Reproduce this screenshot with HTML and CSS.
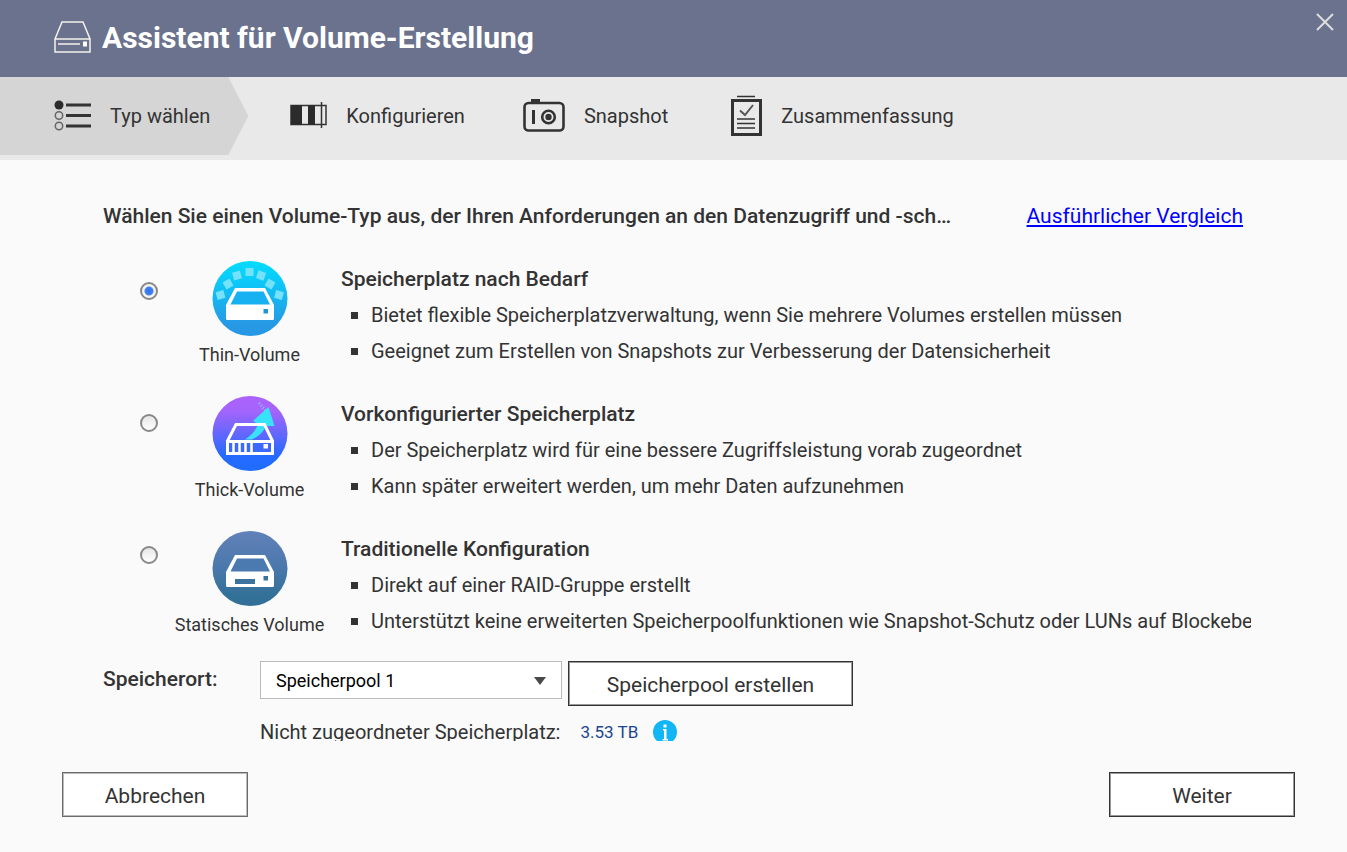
FILE: index.html
```html
<!DOCTYPE html>
<html lang="de">
<head>
    <meta charset="UTF-8">
    <meta name="viewport" content="width=device-width, initial-scale=1.0">
    <title>Assistent für Volume-Erstellung</title>
    <link rel="stylesheet" href="styles.css">
</head>
<body>
    <header class="header">
        <svg class="header-icon" width="37" height="34" viewBox="0 0 37 34" fill="none" stroke="#f4f2ec" stroke-width="1.5">
            <path d="M1 18 L8 1 H29 L36 18 V31 H1 Z M1 18 H36"/>
            <path d="M4 23 H26" stroke-width="1.5"/>
            <rect x="29" y="20.500" width="4" height="5" fill="#fff" stroke="none"/>
        </svg>
        <h1>Assistent für Volume-Erstellung</h1>
        <button class="close" type="button" aria-label="Schließen">
            <svg width="18" height="18" viewBox="0 0 18 18" stroke="#dedede" stroke-width="2"><path d="M1 1 L17 17 M17 1 L1 17"/></svg>
        </button>
    </header>

    <nav>
        <ol class="steps">
            <li class="step active">
                <svg width="37" height="34" viewBox="0 0 37 34" fill="none" stroke="#333">
                    <circle cx="5" cy="6" r="4.5" fill="#2b2b2b" stroke="none"/>
                    <circle cx="5" cy="16.5" r="3.7" stroke="#666" stroke-width="1.5"/>
                    <circle cx="5" cy="27" r="3.7" stroke="#666" stroke-width="1.5"/>
                    <path d="M12 6 H37 M12 16.5 H37 M12 27 H37" stroke-width="3"/>
                </svg>
                <span>Typ wählen</span>
            </li>
            <li class="step">
                <svg width="37" height="28" viewBox="0 0 37 28" fill="none" stroke="#333">
                    <rect x="1" y="3.500" width="35" height="19" stroke-width="1.5"/>
                    <path d="M1 3.500 H12 V22.500 H1 Z M18 3.500 H25 V22.500 H18 Z" fill="#2b2b2b" stroke="none"/>
                    <path d="M31.5 0 V26" stroke-width="1.5"/>
                </svg>
                <span>Konfigurieren</span>
            </li>
            <li class="step">
                <svg width="42" height="36" viewBox="0 0 42 36" fill="none" stroke="#333">
                    <rect x="1.5" y="5" width="39" height="27.5" rx="4" stroke-width="2.6"/>
                    <rect x="8" y="1" width="9" height="4" fill="#333" stroke="none"/>
                    <path d="M10.5 12 V26" stroke-width="3"/>
                    <circle cx="25.5" cy="19" r="6.3" stroke-width="2.6"/>
                    <circle cx="25.5" cy="19" r="3.2" fill="#333" stroke="none"/>
                </svg>
                <span>Snapshot</span>
            </li>
            <li class="step">
                <svg width="34" height="42" viewBox="-3 0 34 42" fill="none" stroke="#333">
                    <path d="M6 1.5 H24" stroke-width="1.5"/>
                    <rect x="1.5" y="5.5" width="28" height="34" stroke-width="3"/>
                    <path d="M9 15.5 L14 20 L22 10" stroke="#555" stroke-width="2"/>
                    <path d="M6 24 H24 M6 28.5 H24 M6 33 H24" stroke-width="1.4"/>
                </svg>
                <span>Zusammenfassung</span>
            </li>
        </ol>
    </nav>

    <main class="content">
        <div class="intro">
            <h2>Wählen Sie einen Volume-Typ aus, der Ihren Anforderungen an den Datenzugriff und -schutz entspricht:</h2>
            <a href="#">Ausführlicher Vergleich</a>
        </div>

        <div class="options">
            <div class="radios">
                <input type="radio" name="volume" id="thin" checked>
                <input type="radio" name="volume" id="thick">
                <input type="radio" name="volume" id="static">
            </div>
            <div class="types">
                <div class="type">
                    <label class="type-label" for="thin">
                        <svg width="76" height="76" viewBox="0 0 76 76">
                            <defs>
                                <linearGradient id="thinFill" x1="0" y1="0" x2="0" y2="1">
                                    <stop offset="0" stop-color="#06dcfc"/>
                                    <stop offset="0.25" stop-color="#0bcaf9"/>
                                    <stop offset="0.85" stop-color="#2798e4"/>
                                    <stop offset="1" stop-color="#2798e4"/>
                                </linearGradient>
                            </defs>
                            <circle cx="38" cy="37.500" r="37.500" fill="url(#thinFill)"/>
                            <g fill="#74e2fb">
                                <rect x="4.500" y="30" width="8" height="8" transform="rotate(-15 8.500 34)"/>
                                <rect x="12" y="19" width="8" height="8" transform="rotate(-30 16 23)"/>
                                <rect x="21" y="10.500" width="8" height="8" transform="rotate(-15 25 14.500)"/>
                                <rect x="33.500" y="7" width="8" height="8"/>
                                <rect x="45" y="10.500" width="8" height="8" transform="rotate(20 49 14.500)"/>
                                <rect x="54" y="19" width="8" height="8" transform="rotate(30 58 23)"/>
                                <rect x="63" y="30" width="8" height="8" transform="rotate(15 67 34)"/>
                            </g>
                            <path d="M23 27 H53 L62 44 V57.500 Q62 59 60.500 59 H15.500 Q14 59 14 57.500 V44 Z" fill="#fff"/>
                            <path d="M25 30.500 H51.500 L58 43.500 H18.500 Z" fill="#17b1f1"/>
                            <rect x="51.500" y="48" width="4.500" height="4.500" fill="#1c97d4"/>
                        </svg>
                        <span>Thin-Volume</span>
                    </label>
                    <div class="type-text">
                        <h3>Speicherplatz nach Bedarf</h3>
                        <ul>
                            <li>Bietet flexible Speicherplatzverwaltung, wenn Sie mehrere Volumes erstellen müssen</li>
                            <li>Geeignet zum Erstellen von Snapshots zur Verbesserung der Datensicherheit</li>
                        </ul>
                    </div>
                </div>
                <div class="type">
                    <label class="type-label" for="thick">
                        <svg width="76" height="76" viewBox="0 0 76 76">
                            <defs>
                                <linearGradient id="thickFill" x1="0" y1="0" x2="0" y2="1">
                                    <stop offset="0" stop-color="#ac62fc"/>
                                    <stop offset="0.2" stop-color="#a464fc"/>
                                    <stop offset="0.8" stop-color="#246aff"/>
                                    <stop offset="1" stop-color="#1f6dff"/>
                                </linearGradient>
                            </defs>
                            <circle cx="38" cy="37.500" r="37.500" fill="url(#thickFill)"/>
                            <path d="M47 7 L54 15" fill="none" stroke="#8fc4fb" stroke-width="3" stroke-dasharray="1 2"/>
                            <path d="M56.500 11 L62.500 30 L54 30 Q50 39 40 43.500 H33 Q43 37 46 28 L41 25 Z" fill="#38e2fb"/>
                            <path d="M15.500 45 L24 28.500 H52.500 L60.500 45" fill="none" stroke="#fff" stroke-width="3"/>
                            <rect x="15.500" y="45.500" width="45" height="12" fill="#3c68fb" stroke="#fff" stroke-width="3"/>
                            <path d="M21.500 45 V57 M27.500 45 V57 M33.500 45 V57 M39.500 45 V57" stroke="#fff" stroke-width="2.500"/>
                            <rect x="51.500" y="48" width="4.500" height="4.500" fill="#fff"/>
                        </svg>
                        <span>Thick-Volume</span>
                    </label>
                    <div class="type-text">
                        <h3>Vorkonfigurierter Speicherplatz</h3>
                        <ul>
                            <li>Der Speicherplatz wird für eine bessere Zugriffsleistung vorab zugeordnet</li>
                            <li>Kann später erweitert werden, um mehr Daten aufzunehmen</li>
                        </ul>
                    </div>
                </div>
                <div class="type">
                    <label class="type-label" for="static">
                        <svg width="76" height="76" viewBox="0 0 76 76">
                            <defs>
                                <linearGradient id="staticFill" x1="0" y1="0" x2="0" y2="1">
                                    <stop offset="0" stop-color="#6181b9"/>
                                    <stop offset="0.45" stop-color="#4c79ad"/>
                                    <stop offset="0.85" stop-color="#337198"/>
                                    <stop offset="1" stop-color="#316f96"/>
                                </linearGradient>
                            </defs>
                            <circle cx="38" cy="37.500" r="37.500" fill="url(#staticFill)"/>
                            <path d="M23 24 H53 L62 41 V54.500 Q62 56 60.500 56 H15.500 Q14 56 14 54.500 V41 Z" fill="#fff"/>
                            <path d="M25 27.500 H51.500 L58 40.500 H18.500 Z" fill="#4b7ab1"/>
                            <rect x="23" y="48" width="20" height="5" fill="#3b739f"/>
                            <rect x="51.500" y="45" width="4.500" height="4.500" fill="#3b739f"/>
                        </svg>
                        <span>Statisches Volume</span>
                    </label>
                    <div class="type-text">
                        <h3>Traditionelle Konfiguration</h3>
                        <ul>
                            <li>Direkt auf einer RAID-Gruppe erstellt</li>
                            <li>Unterstützt keine erweiterten Speicherpoolfunktionen wie Snapshot-Schutz oder LUNs auf Blockebene</li>
                        </ul>
                    </div>
                </div>
            </div>
        </div>

        <div class="location">
            <label class="location-label" for="pool">Speicherort:</label>
            <div class="location-fields">
                <div class="location-row">
                    <div class="select">
                        <select id="pool">
                            <option>Speicherpool 1</option>
                        </select>
                    </div>
                    <button class="btn btn-wide" type="button">Speicherpool erstellen</button>
                </div>
                <div class="free-space">
                    <span>Nicht zugeordneter Speicherplatz:</span>
                    <span class="size">3.53 TB</span>
                    <svg width="24" height="24" viewBox="0 0 24 24">
                        <circle cx="12" cy="12" r="12" fill="#12b5f5"/>
                        <path d="M10 9 H13.500 V19 H15 V20.500 H9.500 V19 H11 V10.500 H10 Z M10.500 4.500 H13.500 V7.500 H10.500 Z" fill="#fff"/>
                    </svg>
                </div>
            </div>
        </div>
    </main>

    <footer class="footer">
        <button class="btn btn-cancel" type="button">Abbrechen</button>
        <button class="btn" type="button">Weiter</button>
    </footer>
</body>
</html>
```
FILE: styles.css
```css
* {
    box-sizing: border-box;
}
body {
    margin: 0;
    height: 100vh;
    display: flex;
    flex-direction: column;
    font-family: Roboto, sans-serif;
    font-size: 20px;
    line-height: 36px;
    color: #333;
    background: #fafafa;
    overflow: hidden;
}
h1, h2, h3, ul, ol {
    margin: 0;
    padding: 0;
}
svg {
    flex: none;
    display: block;
}
.header {
    display: flex;
    align-items: center;
    gap: 11px;
    padding: 20px 13px 21px 54px;
    background: #6b728e;
}
.header h1 {
    flex: 1;
    font-size: 30px;
    font-weight: 700;
    color: #fff;
}
.close {
    align-self: flex-start;
    margin-top: -7px;
    padding: 0;
    border: none;
    background: none;
    cursor: pointer;
}
.steps {
    display: flex;
    height: 83px;
    list-style: none;
    background: #e9e9e9;
}
.step {
    display: flex;
    align-items: center;
    gap: 19px;
    height: 78px;
    margin-right: 42px;
    white-space: nowrap;
}
.step:nth-child(n+2) {
    margin-right: 58px;
}
.step.active {
    padding: 0 38px 0 54px;
    background: #d5d5d5;
    clip-path: polygon(0 0, calc(100% - 20px) 0, 100% 50%, calc(100% - 20px) 100%, 0 100%);
}
.step:last-child {
    margin: 0 0 0 2px;
}
.content {
    flex: 1;
    min-height: 0;
    padding: 38px 104px 0 103px;
    overflow: hidden;
}
.intro {
    display: flex;
    gap: 68px;
    margin-bottom: 27px;
}
.intro h2 {
    flex: 1;
    min-width: 0;
    font-size: 21px;
    font-weight: 500;
    white-space: nowrap;
    overflow: hidden;
    text-overflow: ellipsis;
}
.intro a {
    font-size: 21px;
    color: #0000ff;
}
.options {
    display: flex;
    padding-left: 37px;
}
.radios {
    display: flex;
    flex-direction: column;
    gap: 114px;
    padding-top: 21px;
}
.radios input {
    appearance: none;
    width: 18px;
    height: 18px;
    margin: 0;
    border: 2px solid #888;
    border-radius: 50%;
    background: linear-gradient(#e6e6e6, #fff);
}
.radios input:checked {
    background: radial-gradient(circle, #2f6fe6 0, #4584f4 4px, #f4f4f4 5px);
}
.types {
    flex: 1;
    min-width: 0;
    display: flex;
    flex-direction: column;
    gap: 27px;
    margin-right: -8px;
}
.type {
    display: flex;
}
.type-label {
    flex: none;
    width: 183px;
    display: flex;
    flex-direction: column;
    align-items: center;
    gap: 4px;
    font-size: 18px;
    line-height: 28px;
}
.type-text {
    flex: 1;
    min-width: 0;
    overflow: hidden;
    white-space: nowrap;
}
.type-text h3 {
    font-size: 21px;
    font-weight: 500;
}
.type-text ul {
    list-style: none;
}
.type-text li {
    display: flex;
    align-items: center;
    gap: 13px;
    padding-left: 10px;
}
.type-text li::before {
    content: "";
    flex: none;
    width: 7px;
    height: 7px;
    background: #333;
}
.location {
    display: flex;
    margin-top: 22px;
}
.location-label {
    width: 157px;
    font-size: 21px;
    font-weight: 500;
}
.location-row {
    display: flex;
    align-items: flex-start;
    gap: 6px;
}
.select {
    position: relative;
    width: 302px;
}
.select::after {
    content: "";
    position: absolute;
    top: 16px;
    right: 16px;
    border: 6px solid transparent;
    border-top: 8px solid #4a4a4a;
    border-bottom: none;
    pointer-events: none;
}
.select select {
    appearance: none;
    display: block;
    width: 100%;
    height: 38px;
    padding: 0 15px;
    border: 1px solid #bbb;
    border-radius: 0;
    font-family: inherit;
    font-size: 18px;
    color: #000;
    background: #fff;
}
.free-space {
    display: flex;
    align-items: center;
    margin-top: 8px;
}
.free-space .size {
    margin: 0 15px 0 20px;
    font-size: 17px;
    color: #1b458f;
}
.btn {
    height: 45px;
    width: 186px;
    padding: 2px 0 0;
    border: 1px solid #333;
    box-shadow: inset 0 0 0 1px #999;
    font-family: inherit;
    font-size: 21px;
    color: #333;
    background: #fff;
    cursor: pointer;
}
.btn-wide {
    width: 285px;
}
.btn-cancel {
    border-color: #6b6b6b;
    box-shadow: inset 0 0 0 1px #bbb;
}
.footer {
    display: flex;
    justify-content: space-between;
    padding: 31px 52px 35px 62px;
}
```
